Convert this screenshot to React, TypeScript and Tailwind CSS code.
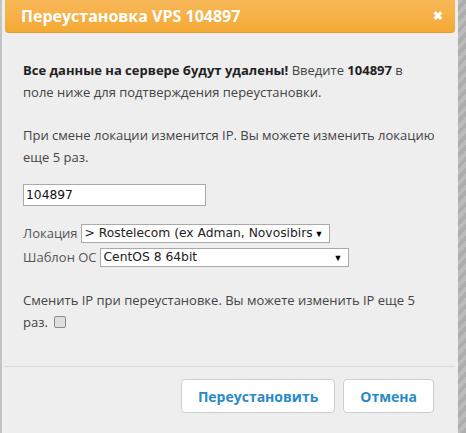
import React from 'react';

const font = { fontFamily: '"Open Sans", "Noto Sans", sans-serif' };
const fieldFont = { fontFamily: '"DejaVu Sans", sans-serif', fontSize: 12.3 };

const FakeSelect = ({ value, width }: { value: string; width: string }) => (
  <div className={`flex h-[19px] items-center justify-between border border-[#a9a9a9] bg-white pl-[3px] pr-[5px] text-[#222] ${width}`}>
    <span className="overflow-hidden whitespace-nowrap" style={fieldFont}>{value}</span>
    <span className="ml-[2px] shrink-0 text-[9px] leading-none text-black">▼</span>
  </div>
);

const App = () => {
  return (
    <div className="flex h-[433px] w-[466px] overflow-hidden" style={font}>
      <div className="w-[2px] bg-[#c4c4c4]" />
      <div className="flex w-[456px] flex-col bg-[#eeeeee]">
        <div className="mx-[3px] flex h-[33px] items-center justify-between rounded-b-[4px] border-b border-[#e49b2c] bg-gradient-to-b from-[#f8b858] to-[#f4a933] pl-[16px] pr-[12px]">
          <span className="text-[16px] font-bold text-white">Переустановка VPS 104897</span>
          <span className="text-[12px] font-bold text-white">✖</span>
        </div>

        <div className="px-[21px] pt-[26px] text-[13px] leading-[22px] text-[#444]">
          <p className="w-[400px]">
            <b className="text-[#222]">Все данные на сервере будут удалены!</b> Введите <b className="text-[#222]">104897</b> в поле ниже для подтверждения переустановки.
          </p>
          <p className="mt-[21px]">При смене локации изменится IP. Вы можете изменить локацию еще 5 раз.</p>

          <div className="mt-[16px] flex h-[22px] w-[183px] items-center border border-[#a9a9a9] bg-white px-[2px] text-[#111]" style={fieldFont}>
            104897
          </div>

          <div className="mt-[16px] flex flex-col gap-[2px] text-[#555]">
            <div className="flex items-center gap-[3px]">
              <span>Локация</span>
              <FakeSelect value="> Rostelecom (ex Adman, Novosibirs" width="w-[249px]" />
            </div>
            <div className="flex items-center gap-[3px]">
              <span>Шаблон ОС</span>
              <FakeSelect value="CentOS 8 64bit" width="w-[249px]" />
            </div>
          </div>

          <p className="mt-[21px]">
            Сменить IP при переустановке. Вы можете изменить IP еще 5 раз.
            <span className="ml-[6px] inline-block h-[12px] w-[12px] rounded-[2px] border border-[#8a8a8a] bg-[#dedede] align-[-1px]" />
          </p>
        </div>

        <div className="mx-[3px] mt-auto border-t border-[#d8d8d8]" />
        <div className="flex justify-end gap-[8px] pb-[20px] pr-[24px] pt-[12px]">
          <button className="h-[34px] rounded-[4px] border border-[#cfcfcf] bg-white px-[16px] text-[14px] font-bold text-[#2b8ac6]">
            Переустановить
          </button>
          <button className="h-[34px] rounded-[4px] border border-[#cfcfcf] bg-white px-[16px] text-[14px] font-bold text-[#2b8ac6]">
            Отмена
          </button>
        </div>
      </div>
      <div className="w-[8px] bg-[repeating-linear-gradient(135deg,#bcbcbc_0px,#bcbcbc_4px,#adadad_4px,#adadad_8px)]" />
    </div>
  );
};

export default App;
